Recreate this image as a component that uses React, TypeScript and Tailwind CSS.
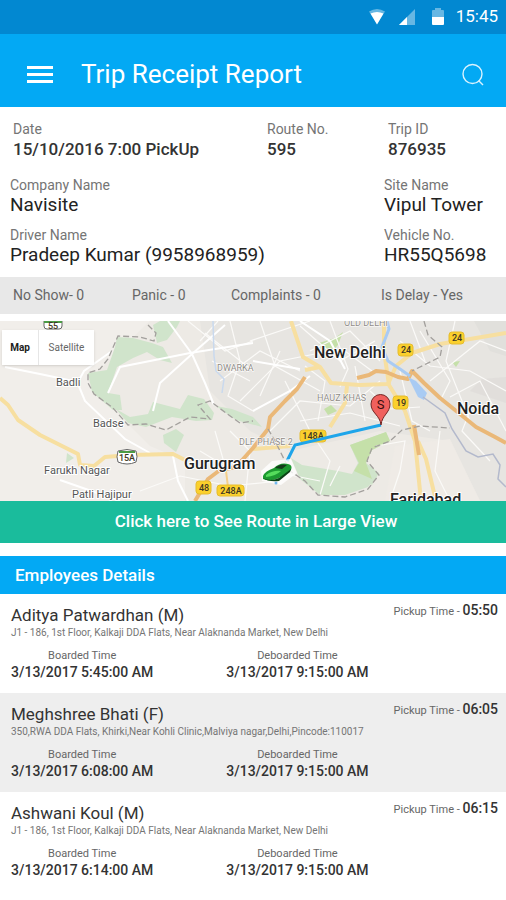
import type { ReactNode } from 'react';

type Employee = {
    name: string;
    address: string;
    pickup: string;
    boarded: string;
    deboarded: string;
};

const employees: Employee[] = [
    {
        name: 'Aditya Patwardhan (M)',
        address: 'J1 - 186, 1st Floor, Kalkaji DDA Flats, Near Alaknanda Market, New Delhi',
        pickup: '05:50',
        boarded: '3/13/2017 5:45:00 AM',
        deboarded: '3/13/2017 9:15:00 AM',
    },
    {
        name: 'Meghshree Bhati (F)',
        address: '350,RWA DDA Flats, Khirki,Near Kohli Clinic,Malviya nagar,Delhi,Pincode:110017',
        pickup: '06:05',
        boarded: '3/13/2017 6:08:00 AM',
        deboarded: '3/13/2017 9:15:00 AM',
    },
    {
        name: 'Ashwani Koul (M)',
        address: 'J1 - 186, 1st Floor, Kalkaji DDA Flats, Near Alaknanda Market, New Delhi',
        pickup: '06:15',
        boarded: '3/13/2017 6:14:00 AM',
        deboarded: '3/13/2017 9:15:00 AM',
    },
];

function StatusBar() {
    return (
        <div className="flex h-[34px] items-center justify-end bg-[#0288d1] pr-2 text-white">
            <svg width="18" height="18" viewBox="0 0 18 18" className="mr-3" aria-hidden="true">
                <path d="M1 3.5 Q9 -1.5 17 3.5 L9 16Z" fill="#fff" opacity=".4" />
                <path d="M2.5 5.5 Q9 2.5 15.5 5.5 L9 16.5Z" fill="#fff" />
            </svg>
            <svg width="18" height="18" viewBox="0 0 18 18" className="mr-4" aria-hidden="true">
                <path d="M1 17 L17 1 V17Z" fill="#fff" opacity=".4" />
                <path d="M1 17 L9 9 V17Z" fill="#fff" />
            </svg>
            <svg width="12" height="18" viewBox="0 0 12 18" className="mr-3" aria-hidden="true">
                <path d="M0 9 V3 Q0 2 1 2 H3 V0 H9 V2 H11 Q12 2 12 3 V9Z" fill="#fff" opacity=".4" />
                <path d="M0 9 H12 V16 Q12 17 11 17 H1 Q0 17 0 16Z" fill="#fff" />
            </svg>
            <span className="text-[17px]">15:45</span>
        </div>
    );
}

function Header() {
    return (
        <header className="flex h-[73px] items-center bg-[#03a9f4] pt-2 pr-[21px] pl-[27px] text-white">
            <button type="button" aria-label="Open menu" className="mr-[28px]">
                <svg width="26" height="18" viewBox="0 0 26 18" fill="#fff">
                    <rect y="0" width="26" height="3" />
                    <rect y="7" width="26" height="3" />
                    <rect y="14" width="26" height="3" />
                </svg>
            </button>
            <h1 className="flex-1 text-[26px]">Trip Receipt Report</h1>
            <button type="button" aria-label="Search">
                <svg width="24" height="24" viewBox="0 0 24 24" fill="none" stroke="#d9f2fe" strokeWidth="1.4">
                    <circle cx="11.5" cy="11" r="9.5" />
                    <path d="M17.5 17.5 L22 22" />
                </svg>
            </button>
        </header>
    );
}

function Field({ label, children, strong }: { label: string; children: ReactNode; strong?: boolean }) {
    return (
        <div>
            <dt className="text-[14px] leading-5 text-[#757575]">{label}</dt>
            <dd className={strong ? 'text-[17px] leading-5 font-medium text-[#333]' : 'text-[19px] leading-5 text-[#222]'}>
                {children}
            </dd>
        </div>
    );
}

function RouteMap() {
    return (
        <div className="relative h-[180px] overflow-hidden bg-[#ebe8e2]">
            <svg
                className="h-full w-full"
                viewBox="0 0 506 180"
                preserveAspectRatio="xMidYMid slice"
                fontFamily="Roboto, sans-serif"
                role="img"
                aria-label="Route map"
            >
                <rect width="506" height="180" fill="#edeae5" />
                <path d="M0 0 H150 L88 60 L115 90 L150 125 L185 140 V180 H0Z" fill="#f1eeea" />
                <path d="M200 0 H506 V180 H480 L450 120 L380 110 L290 130 L250 110 L210 70Z" fill="#e7e5e1" />
                <path d="M395 125 L450 118 L480 180 H385Z" fill="#efebe6" />

                {/* parks */}
                <g fill="#d0e4cb">
                    <path d="M117 16 L133 17 L152 22 L163 26 L172 42 L160 39 L147 31 L133 37 L117 46 L108 72 L120 74 L122 89 L113 89 L92 71 L88 52 L107 49 L115 26Z" />
                    <path d="M153 4 L160 0 H180 L177 6 L167 19 L157 22Z" />
                    <path d="M116 88 L130 96 L148 93 L153 81 L180 88 L188 74 L204 78 L214 92 L212 99 L196 100 L172 96 L146 106 L128 102Z" />
                    <path d="M163 114 L176 108 L184 114 L176 131 L164 122Z" />
                    <path d="M216 85 L232 88 L253 96 L262 106 L236 99Z" />
                    <path d="M67 132 L74 137 L66 142Z" />
                    <path d="M291 137 L302 144 L320 147 L338 150 L352 153 L376 156 L368 166 L345 174 L320 174 L300 158Z" />
                    <path d="M350 124 L386 111 L390 120 L372 129 L366 142 L379 152 L372 164 L352 153 L358 142Z" />
                </g>
                <g fill="#c5e0a9">
                    <path d="M350 124 L386 111 L390 120 L372 129 L366 142 L372 158 L354 150 L359 142Z" />
                    <path d="M319 22 L335 17 L343 11 L338 24 L325 38Z" />
                    <path d="M324 88 L331 84 L337 90 L328 94Z" />
                    <path d="M452 41 L460 40 L456 46Z" />
                </g>
                <path d="M474 0 L506 0 V35 L490 30Z" fill="#dedcd9" opacity=".6" />
                <path d="M470 70 L482 58 L506 56 V82Z" fill="#dedcd9" opacity=".7" />

                {/* minor roads */}
                <g fill="none" stroke="#fbfaf8" strokeWidth="1.2">
                    <path d="M188 0 L225 30 L253 20 M200 20 L218 0 M212 40 L250 60 M230 0 L240 40 L228 75 L253 90 M205 12 L253 50" />
                    <path d="M220 60 L260 30 L300 50 M240 80 L280 40 L330 30 M260 0 L275 45 L320 70 M250 20 L310 0" />
                    <path d="M270 110 L300 80 L350 85 L380 60 M285 60 L310 110 L330 140 L320 174 M300 100 L350 92 L400 105" />
                    <path d="M300 5 L340 40 L375 20 M310 30 L350 10 L380 40 M330 0 L348 48 L340 66 M345 30 L372 50" />
                    <path d="M400 20 L430 45 L470 50 L506 70 M420 10 L450 60 L440 80 M455 0 L446 40 L470 100 M400 50 L412 100 L430 110" />
                    <path d="M430 60 L480 20 L506 30 M450 76 L480 60 L506 110 M470 90 L462 110 L490 140 M410 0 L425 40" />
                    <path d="M376 125 L405 120 L400 150 L390 180 M340 145 L330 165 M270 150 L320 160 M440 110 L435 150 L450 180" />
                    <path d="M140 170 L180 155 L230 165 L280 160 M200 130 L225 145 L215 110 M230 110 L250 130 L245 180" />
                    <path d="M370 70 L390 88 L420 86 M355 45 L365 100 M305 45 L325 60 L318 100 M280 30 L260 75" />
                </g>

                {/* roads */}
                <g fill="none" stroke="#fff" strokeWidth="2">
                    <path d="M5 46 L40 53 L78 61 L84 50 L112 30 M78 63 L85 80 L125 118 L150 132" />
                    <path d="M108 72 L120 46 L150 40 L190 32 L253 22 M168 0 L192 33 L205 62 L214 84 M192 33 L160 62 L153 90" />
                    <path d="M192 33 L225 4 M173 135 L178 160 L188 180 M60 159 L120 180" />
                    <path d="M253 40 L300 48 M300 0 L330 20 L345 48 M253 90 L290 70 L310 55" />
                </g>
                <path d="M213 0 L214 35 L216 50 L224 58 L222 72" fill="none" stroke="#c9d9ee" strokeWidth="1.5" />

                {/* highways */}
                <g fill="none" stroke="#f7dfa0" strokeWidth="4" strokeLinejoin="round">
                    <path d="M0 77 L8 84 L18 99 L40 114 L78 133 L80 144 L94 145 L105 136 L130 134 L173 133 L185 139" />
                    <path d="M291 0 L303 36 L320 46 L331 62 L360 64 L388 63 L396 45 L412 32 L440 23 L470 18 L506 12" />
                    <path d="M347 65 L345 82 L330 106 M320 46 L305 49 M384 0 L384 30 L389 64 L405 90 L415 120 L421 180" />
                    <path d="M418 120 L426 138 L436 180 M253 128 L290 125" />
                </g>
                <g fill="none" stroke="#eab878" strokeWidth="4" strokeLinejoin="round">
                    <path d="M195 180 L208 158 L220 149 L236 146 L253 127 L268 108 L270 96 L285 80 L297 68 L305 56" />
                    <path d="M357 57 L369 54 L376 50 L386 51 L398 56 L408 58 L412 50 L424 62 L440 77 L460 93 L476 106 L495 116 L506 122" />
                    <path d="M414 104 L419 134" />
                </g>
                <path d="M226 150 L228 166" stroke="#f4cf8a" strokeWidth="2" />

                {/* river */}
                <path d="M387 0 L389 8 L382 26 L388 40 L400 48 L410 55" fill="none" stroke="#a9cbf3" strokeWidth="3" />
                <path d="M408 56 L416 60 L427 72 L424 79 L418 76Z" fill="#a9cbf3" />
                <path d="M423 76 L445 92 L452 108 L466 130 L478 136 L493 133 L500 144 L498 158 L506 166" fill="none" stroke="#b3b9cc" strokeWidth="1.5" />

                {/* borders */}
                <g fill="none" stroke="#a3a09d" strokeWidth="1.3" strokeDasharray="6 3">
                    <path d="M148 4 L156 12 L154 20 L140 16 L118 15 L108 38 L100 48 L88 52 L88 62 L94 73 L112 86 L128 104 L146 103 L166 109 L190 96 L210 98 L198 84 L210 80 L226 92 L240 102 L253 100" />
                    <path d="M268 108 L275 120 L290 150 L305 160 L318 174 L345 176 L368 168 L379 154 L367 140 L372 127 L390 120 L402 109 L420 105 L450 107" />
                    <path d="M424 0 L428 14 L442 26 L440 36 L412 50" />
                </g>

                {/* place names */}
                <g fill="#555" fontSize="11" stroke="#fff" strokeWidth="2" paintOrder="stroke">
                    <text x="56" y="65">Badli</text>
                    <text x="93" y="106">Badse</text>
                    <text x="44" y="153">Farukh Nagar</text>
                    <text x="72" y="177">Patli Hajipur</text>
                </g>
                <g fill="#8f8c87" fontSize="9" stroke="#fff" strokeWidth="1" paintOrder="stroke">
                    <text x="217" y="50">DWARKA</text>
                    <text x="344" y="5">OLD DELHI</text>
                    <text x="317" y="80">HAUZ KHAS</text>
                    <text x="239" y="124">DLF PHASE 2</text>
                </g>
                <g fill="#222" fontSize="16" fontWeight="500" stroke="#fff" strokeWidth="2" paintOrder="stroke">
                    <text x="314" y="37">New Delhi</text>
                    <text x="457" y="93">Noida</text>
                    <text x="184" y="148">Gurugram</text>
                    <text x="390" y="184">Faridabad</text>
                </g>

                {/* road shields */}
                <g fill="#fbd02c" stroke="#e5bc2f" strokeWidth="1">
                    <rect x="398" y="23" width="15" height="12" rx="3" />
                    <rect x="449" y="11" width="15" height="12" rx="3" />
                    <rect x="393" y="75" width="15" height="13" rx="3" />
                    <rect x="196" y="160" width="15" height="13" rx="3" />
                    <rect x="217" y="164" width="27" height="11" rx="3" />
                    <rect x="300" y="109" width="26" height="12" rx="3" />
                </g>
                <path d="M61 -3 H71 L74 -1 L77 -3 V0" fill="#f7d65c" />
                <rect x="44" y="-5" width="18" height="13" rx="3" fill="#fff" stroke="#666" />
                <path d="M44 1 H62" stroke="#4c9b45" strokeWidth="2" />
                <path d="M118 130 Q127 127 136 130 Q138 136 136 141 Q127 145 118 141 Q116 136 118 130Z" fill="#fff" stroke="#666" />
                <path d="M119 131 H135" stroke="#4c9b45" strokeWidth="2" />
                <g fill="#3f3824" fontSize="9" fontWeight="500" textAnchor="middle">
                    <text x="406" y="32">24</text>
                    <text x="457" y="20">24</text>
                    <text x="401" y="85">19</text>
                    <text x="204" y="170">48</text>
                    <text x="231" y="173">248A</text>
                    <text x="313" y="118">148A</text>
                    <text x="127" y="140">15A</text>
                    <text x="53" y="8">55</text>
                </g>

                {/* route */}
                <path d="M381 104 L295 124 L287 140" fill="none" stroke="#1ea5ea" strokeWidth="3" />
                <path d="M381 104 C380 94 371 92 371 83 A9.5 9.5 0 0 1 390 83 C390 92 382 94 381 104Z" fill="#f0605d" stroke="#732422" strokeWidth="1" />
                <text x="380.5" y="88" fontSize="13" textAnchor="middle" fill="#3a0d0d">S</text>

                {/* car */}
                <path d="M261 150 L272 140 L291 138 L297 152 L281 164 L262 160Z" fill="#fff" opacity=".8" />
                <path d="M263 155 Q265 150 274 147 Q280 141 288 143 Q293 144 291 149 Q286 154 279 157 Q270 161 263 158Z" fill="#1d9a31" />
                <path d="M266 154 Q273 149 281 150 Q276 155 266 156Z" fill="#55dc5c" />
                <path d="M275 147 Q280 142 287 144 L282 148Z" fill="#153c1c" />
                <path d="M263 157 Q270 161 279 157 L291 148 L290 151 L279 160 Q268 161 263 157Z" fill="#0b4315" />
                <circle cx="276" cy="162" r="1.5" fill="#73b9ef" />
            </svg>

            <div className="absolute top-[9px] left-[2px] flex h-[35px] bg-white text-[10px] shadow-sm">
                <button type="button" className="w-[37px] border-r border-[#e6e6e6] font-bold text-[#222]">
                    Map
                </button>
                <button type="button" className="w-[55px] text-[#666]">
                    Satellite
                </button>
            </div>
        </div>
    );
}

function TimeStamp({ label, value }: { label: string; value: string }) {
    return (
        <div className="text-center leading-4">
            <dt className="text-[11px] text-[#666]">{label}</dt>
            <dd className="text-[14px] font-medium text-[#333]">{value}</dd>
        </div>
    );
}

function EmployeeRow({ employee }: { employee: Employee }) {
    return (
        <li className="flex items-start justify-between pt-1 pr-2 pb-[13px] pl-[11px] even:bg-[#eee]">
            <div className="pt-[6px]">
                <h3 className="text-[17px] leading-[22px] text-[#333]">{employee.name}</h3>
                <p className="text-[10px] leading-[14px] text-[#757575]">{employee.address}</p>
                <dl className="mt-2 flex gap-[73px]">
                    <TimeStamp label="Boarded Time" value={employee.boarded} />
                    <TimeStamp label="Deboarded Time" value={employee.deboarded} />
                </dl>
            </div>
            <p className="text-[11px] leading-6 whitespace-nowrap text-[#666]">
                Pickup Time - <span className="text-[14px] font-medium text-[#333]">{employee.pickup}</span>
            </p>
        </li>
    );
}

export default function App() {
    return (
        <div className="min-h-screen bg-white font-['Roboto',sans-serif]">
            <StatusBar />
            <Header />

            {/* Trip summary */}
            <section className="py-3">
                <dl className="grid grid-cols-[254fr_121fr_118fr] pl-[13px]">
                    <Field label="Date" strong>15/10/2016 7:00 PickUp</Field>
                    <Field label="Route No." strong>595</Field>
                    <Field label="Trip ID" strong>876935</Field>
                </dl>
                <dl className="mt-4 grid grid-cols-[374fr_122fr] gap-y-[10px] pl-[10px]">
                    <Field label="Company Name">Navisite</Field>
                    <Field label="Site Name">Vipul Tower</Field>
                    <Field label="Driver Name">Pradeep Kumar (9958968959)</Field>
                    <Field label="Vehicle No.">HR55Q5698</Field>
                </dl>
            </section>

            <ul className="grid h-[37px] grid-cols-[119fr_99fr_150fr_125fr] items-center bg-[#e8e8e8] pl-[13px] text-[14px] text-[#666]">
                <li>No Show- 0</li>
                <li>Panic - 0</li>
                <li>Complaints - 0</li>
                <li>Is Delay - Yes</li>
            </ul>

            {/* Map */}
            <section className="pt-[7px]">
                <RouteMap />
                <button type="button" className="h-[42px] w-full bg-[#1abc9c] pl-[6px] text-[17px] font-medium text-white">
                    Click here to See Route in Large View
                </button>
            </section>

            {/* Employees */}
            <section className="mt-[13px]">
                <h2 className="bg-[#03a9f4] pl-[15px] text-[17px] leading-[38px] font-medium text-white">Employees Details</h2>
                <ul>
                    {employees.map((employee) => (
                        <EmployeeRow key={employee.name} employee={employee} />
                    ))}
                </ul>
            </section>
        </div>
    );
}
